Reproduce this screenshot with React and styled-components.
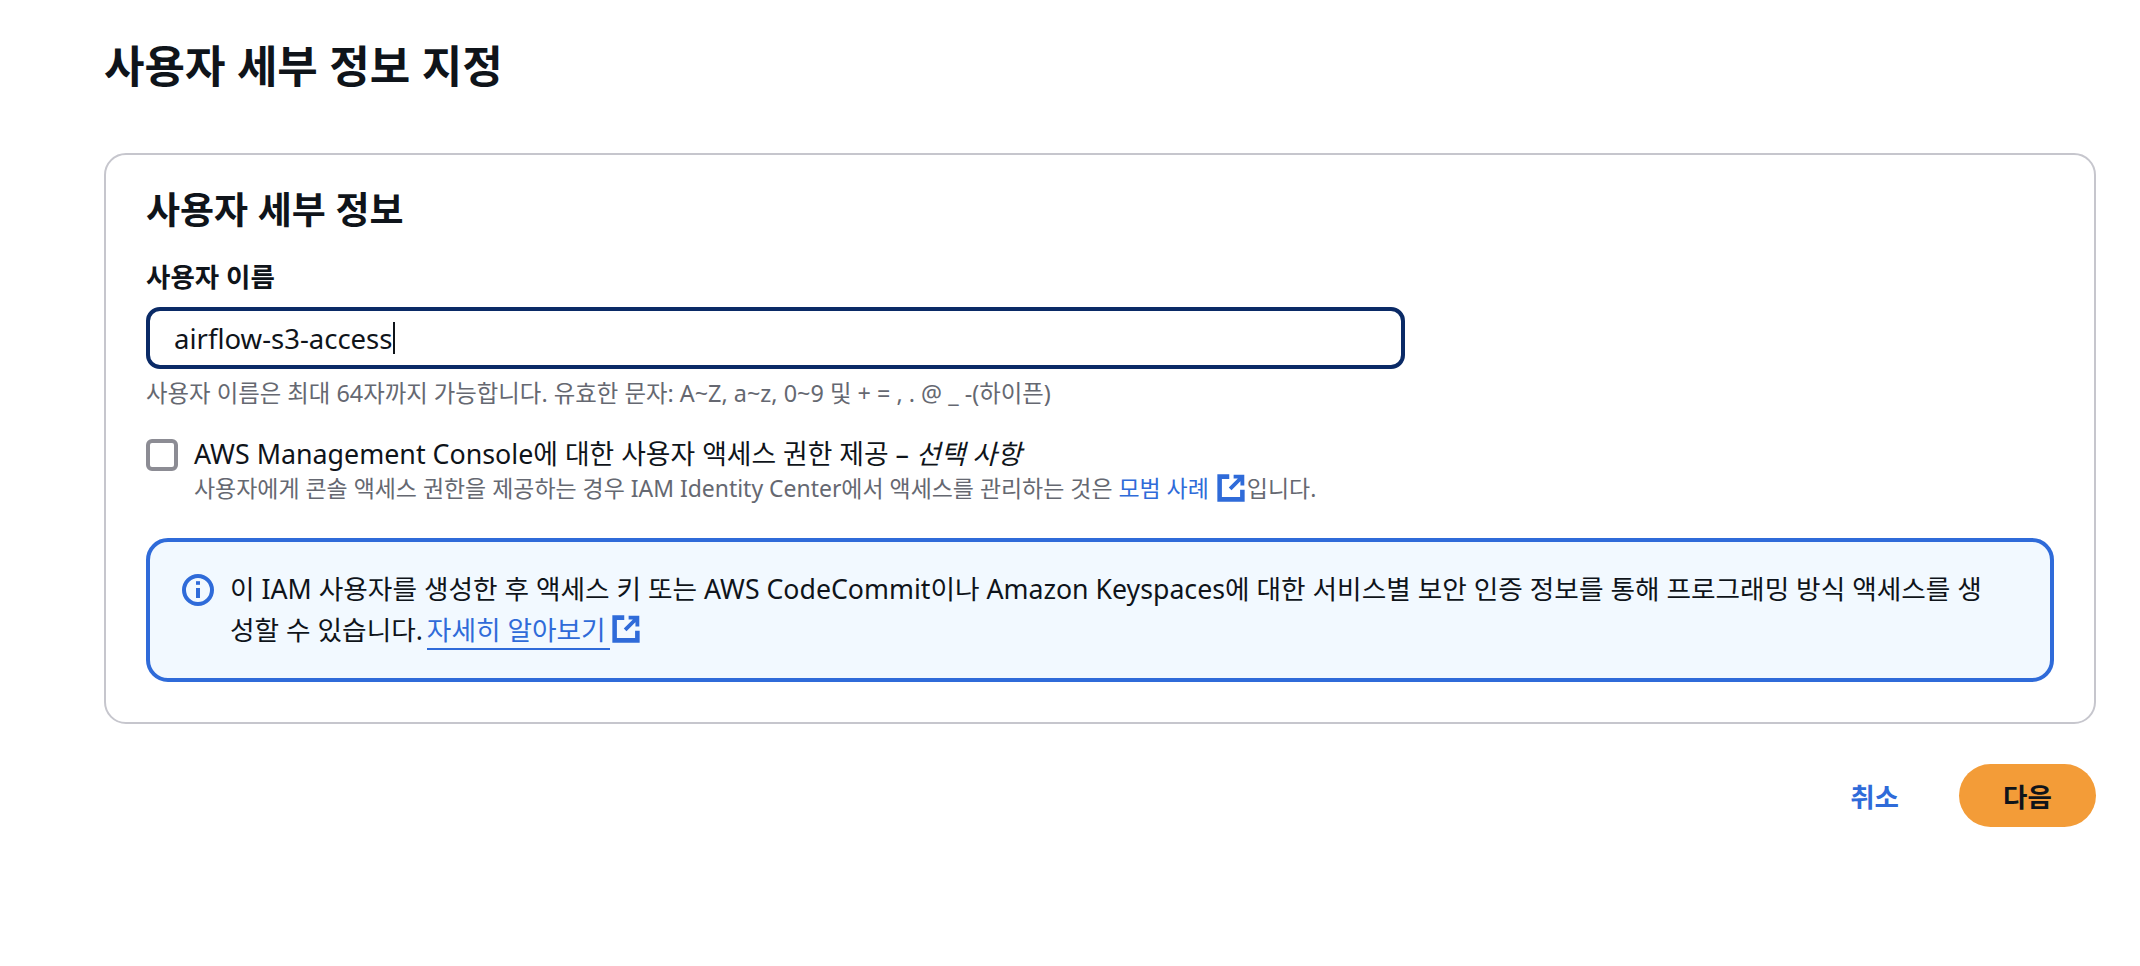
import styled, { createGlobalStyle } from 'styled-components';

const GlobalStyle = createGlobalStyle`
  body {
    margin: 0;
    background: #fff;
    font-family: "Noto Sans", "Noto Sans CJK KR", sans-serif;
    color: #0f141a;
  }
`;

const Page = styled.div`
  width: 2140px;
  height: 966px;
  box-sizing: border-box;
  padding: 38px 44px 0 104px;
`;

const Title = styled.h1`
  margin: 0 0 58px;
  font-size: 44px;
  line-height: 57px;
  font-weight: 700;
`;

const Card = styled.section`
  box-sizing: border-box;
  height: 571px;
  border: 2px solid #c6c6cd;
  border-radius: 22px;
  padding: 31px 40px 0;
`;

const CardTitle = styled.h2`
  margin: 0 0 27px;
  font-size: 37px;
  line-height: 48px;
  font-weight: 700;
`;

const FieldLabel = styled.label`
  display: block;
  font-size: 26.5px;
  line-height: 32px;
  font-weight: 700;
  margin-bottom: 14px;
`;

const InputBox = styled.div`
  box-sizing: border-box;
  width: 1259px;
  height: 62px;
  border: 4px solid #0a2a66;
  border-radius: 14px;
  padding-left: 24px;
  display: flex;
  align-items: center;
  font-size: 27.5px;
`;

const Caret = styled.span`
  display: inline-block;
  width: 2px;
  height: 32px;
  background: #0f141a;
  margin-left: 1px;
`;

const Hint = styled.p`
  margin: 8px 0 0;
  font-size: 23.4px;
  line-height: 32px;
  color: #656871;
`;

const CheckRow = styled.div`
  display: flex;
  gap: 16px;
  margin-top: 30px;
`;

const CheckBox = styled.span`
  box-sizing: border-box;
  flex: none;
  width: 32px;
  height: 32px;
  border: 4px solid #8c8c94;
  border-radius: 6px;
`;

const CheckText = styled.div`
  margin-top: -3px;
`;

const CheckLabel = styled.div`
  font-size: 26.8px;
  line-height: 36px;
  em {
    font-style: italic;
  }
`;

const CheckHint = styled.div`
  font-size: 22.95px;
  line-height: 32px;
  color: #656871;
  display: flex;
  align-items: center;
`;

const LinkText = styled.a`
  color: #2f6bd9;
`;

const IconSvg = styled.svg`
  flex: none;
  display: block;
`;

const Spaced = styled.span`
  display: inline-flex;
  margin: 0 2px 0 8px;
`;

const Alert = styled.div`
  box-sizing: border-box;
  height: 144px;
  margin-top: 34px;
  width: 1908px;
  border: 4px solid #2f6bd9;
  border-radius: 22px;
  background: #f2f9ff;
  padding: 26px 32px;
  display: flex;
  gap: 16px;
`;

const AlertIcon = styled.div`
  margin-top: 6px;
`;

const AlertText = styled.div`
  font-size: 26.7px;
  line-height: 41px;
  white-space: nowrap;
`;

const UnderlinedLink = styled.a`
  display: inline-flex;
  align-items: center;
  color: #2f6bd9;
  border-bottom: 2px solid #2f6bd9;
  line-height: 36px;
  margin-left: -3px;
  position: relative;
  padding-right: 4px;
  margin-right: 32px;
`;

const TrailingIcon = styled.span`
  position: absolute;
  left: 100%;
  top: 3px;
  margin-left: 2px;
`;

const Actions = styled.div`
  display: flex;
  justify-content: flex-end;
  align-items: center;
  gap: 60px;
  margin-top: 40px;
`;

const CancelButton = styled.button`
  border: none;
  background: none;
  padding: 0;
  font: inherit;
  font-size: 26.5px;
  font-weight: 700;
  color: #2f6bd9;
`;

const NextButton = styled.button`
  width: 137px;
  height: 63px;
  border: none;
  border-radius: 32px;
  background: #f39c38;
  font: inherit;
  font-size: 26.5px;
  font-weight: 700;
  color: #0f141a;
`;

function ExternalIcon({ size = 28 }) {
  return (
    <IconSvg width={size} height={size} viewBox="0 0 16 16" fill="none" stroke="#2f6bd9">
      <path d="M7 1.5H1.5v13h13V9" strokeWidth="2.6" />
      <path d="M9.5 1.5h5v5M14 2 7.5 8.5" strokeWidth="2.2" />
    </IconSvg>
  );
}

function InfoIcon() {
  return (
    <IconSvg width="32" height="32" viewBox="0 0 16 16" fill="none" stroke="#2f6bd9" strokeWidth="2">
      <circle cx="8" cy="8" r="7" />
      <path d="M8 7v5" />
      <path d="M8 3.6v1.8" />
    </IconSvg>
  );
}

function App() {
  return (
    <Page>
      <GlobalStyle />
      <Title>사용자 세부 정보 지정</Title>
      <Card>
        <CardTitle>사용자 세부 정보</CardTitle>
        <FieldLabel>사용자 이름</FieldLabel>
        <InputBox>
          airflow-s3-access
          <Caret />
        </InputBox>
        <Hint>사용자 이름은 최대 64자까지 가능합니다. 유효한 문자: A~Z, a~z, 0~9 및 + = , . @ _ -(하이픈)</Hint>
        <CheckRow>
          <CheckBox />
          <CheckText>
            <CheckLabel>
              AWS Management Console에 대한 사용자 액세스 권한 제공 – <em>선택 사항</em>
            </CheckLabel>
            <CheckHint>
              사용자에게 콘솔 액세스 권한을 제공하는 경우 IAM Identity Center에서 액세스를 관리하는 것은&nbsp;
              <LinkText>모범 사례</LinkText>
              <Spaced>
                <ExternalIcon />
              </Spaced>
              입니다.
            </CheckHint>
          </CheckText>
        </CheckRow>
        <Alert>
          <AlertIcon>
            <InfoIcon />
          </AlertIcon>
          <AlertText>
            이 IAM 사용자를 생성한 후 액세스 키 또는 AWS CodeCommit이나 Amazon Keyspaces에 대한 서비스별 보안 인증 정보를 통해 프로그래밍 방식 액세스를 생
            <br />
            성할 수 있습니다.{' '}
            <UnderlinedLink>
              자세히 알아보기
              <TrailingIcon>
                <ExternalIcon />
              </TrailingIcon>
            </UnderlinedLink>
          </AlertText>
        </Alert>
      </Card>
      <Actions>
        <CancelButton>취소</CancelButton>
        <NextButton>다음</NextButton>
      </Actions>
    </Page>
  );
}

export default App;
